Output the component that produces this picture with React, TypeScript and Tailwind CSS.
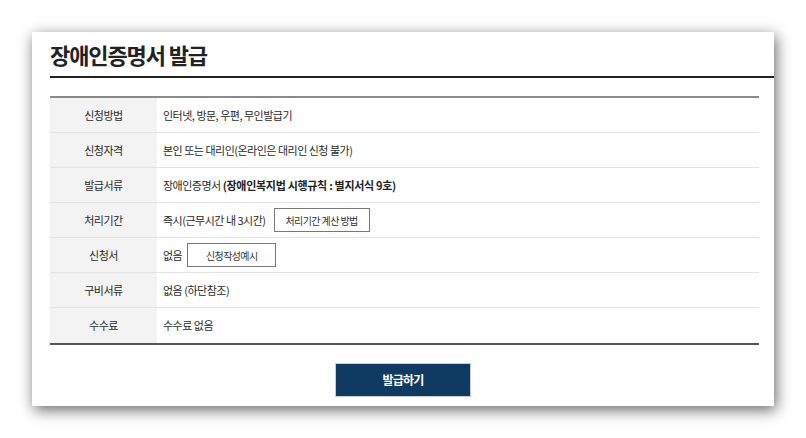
const font = { fontFamily: '"Noto Sans CJK KR", "Noto Sans", sans-serif' };

type Row = { label: string; value: React.ReactNode };

const rows: Row[] = [
  { label: "신청방법", value: "인터넷, 방문, 우편, 무인발급기" },
  { label: "신청자격", value: "본인 또는 대리인(온라인은 대리인 신청 불가)" },
  {
    label: "발급서류",
    value: (
      <>
        장애인증명서&nbsp;
        <b className="font-bold tracking-[-0.3px] text-[#222]">(장애인복지법 시행규칙 : 별지서식 9호)</b>
      </>
    ),
  },
  {
    label: "처리기간",
    value: (
      <>
        즉시(근무시간 내 3시간)
        <span className="ml-[8px] inline-flex h-[24px] w-[96px] items-center justify-center border border-[#777] bg-white text-[10px] tracking-[-0.6px] text-[#333]">
          처리기간 계산 방법
        </span>
      </>
    ),
  },
  {
    label: "신청서",
    value: (
      <>
        없음
        <span className="ml-[5px] inline-flex h-[24px] w-[89px] items-center justify-center border border-[#777] bg-white text-[10px] tracking-[-0.6px] text-[#333]">
          신청작성예시
        </span>
      </>
    ),
  },
  { label: "구비서류", value: "없음 (하단참조)" },
  { label: "수수료", value: "수수료 없음" },
];

export default function App() {
  return (
    <div className="h-[438px] w-[806px] overflow-hidden bg-white pl-[32px] pt-[32px]" style={font}>
      <div className="h-[374px] w-[742px] bg-white shadow-[2px_4px_14px_rgba(0,0,0,0.6)]">
        {/* 제목 */}
        <div className="ml-[18px] flex h-[46px] items-end border-b-2 border-[#222] pb-[11px]">
          <h1 className="text-[22px] font-bold leading-none tracking-[-1.1px] text-[#222]">
            장애인증명서 발급
          </h1>
        </div>

        {/* 표 */}
        <div className="ml-[18px] mr-[15px] mt-[18px] border-t-2 border-b-2 border-t-[#8a8a8a] border-b-[#555]">
          {rows.map((r, i) => (
            <div
              key={r.label}
              className={`flex h-[35px] ${i < rows.length - 1 ? "border-b border-[#e2e2e2]" : ""}`}
            >
              <div className="flex w-[107px] items-center justify-center bg-[#f3f3f3] text-[11px] tracking-[-0.5px] text-[#2a2a2a]">
                {r.label}
              </div>
              <div className="flex flex-1 items-center pl-[6px] text-[11px] tracking-[-0.5px] text-[#2a2a2a]">
                {r.value}
              </div>
            </div>
          ))}
        </div>

        {/* 버튼 */}
        <div className="mt-[18px] flex justify-center">
          <button className="flex h-[34px] w-[136px] items-center justify-center border border-[#c6ceda] bg-[#0f3a62] text-[12px] font-bold tracking-[-0.8px] text-white">
            발급하기
          </button>
        </div>
      </div>
    </div>
  );
}
